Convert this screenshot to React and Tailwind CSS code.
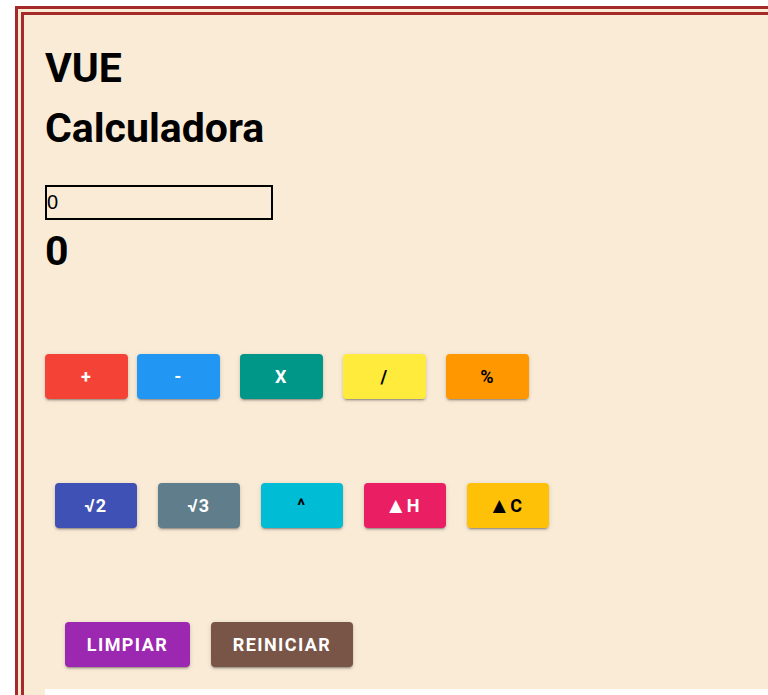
import React from "react";

const shadow = "shadow-[0_3px_1px_-2px_rgba(0,0,0,0.2),0_2px_2px_0_rgba(0,0,0,0.14),0_1px_5px_0_rgba(0,0,0,0.12)]";

function Btn({ className, children }) {
  return (
    <button
      className={`h-[45px] rounded-[4px] font-bold text-[18px] tracking-[0.08em] uppercase flex items-center justify-center shrink-0 ${shadow} ${className}`}
    >
      {children}
    </button>
  );
}

function Tri() {
  return <span className="mr-[3px] font-['DejaVu_Sans',sans-serif] font-normal text-[17px]">▲</span>;
}

export default function App() {
  return (
    <div className="h-[695px] overflow-hidden bg-white">
      <div className="mt-[6px] ml-[15px] w-[800px] border-[9px] border-double border-[#a52a2a] bg-[#faebd7] pt-[23px] pl-[21px] font-['Roboto',sans-serif] text-black">
        <h1 className="text-[41px] leading-[60px] font-bold">VUE</h1>
        <h1 className="text-[41px] leading-[60px] font-bold">Calculadora</h1>
        <input
          readOnly
          value="0"
          className="mt-[27px] block w-[228px] h-[35px] border-2 border-black bg-transparent px-0 text-[20px] font-['Liberation_Sans',sans-serif] outline-none"
        />
        <h1 className="mt-[1px] text-[41px] leading-[60px] font-bold">0</h1>

        <div className="mt-[73px] flex">
          <Btn className="w-[83px] bg-[#f44336] text-white">+</Btn>
          <Btn className="ml-[9px] w-[83px] bg-[#2196f3] text-white">-</Btn>
          <Btn className="ml-[20px] w-[83px] bg-[#009688] text-white">X</Btn>
          <Btn className="ml-[20px] w-[83px] bg-[#ffeb3b] text-black">/</Btn>
          <Btn className="ml-[20px] w-[83px] bg-[#ff9800] text-black">%</Btn>
        </div>

        <div className="mt-[84px] ml-[10px] flex gap-[21px]">
          <Btn className="w-[82px] bg-[#3f51b5] text-white">√2</Btn>
          <Btn className="w-[82px] bg-[#607d8b] text-white">√3</Btn>
          <Btn className="w-[82px] bg-[#00bcd4] text-black">^</Btn>
          <Btn className="w-[82px] bg-[#e91e63] text-white"><Tri />H</Btn>
          <Btn className="w-[82px] bg-[#ffc107] text-black"><Tri />C</Btn>
        </div>

        <div className="mt-[94px] ml-[20px] flex gap-[21px]">
          <Btn className="w-[125px] bg-[#9c27b0] text-white">Limpiar</Btn>
          <Btn className="w-[142px] bg-[#795548] text-white">Reiniciar</Btn>
        </div>

        <div className="mt-[22px] h-[40px] bg-white"></div>
      </div>
    </div>
  );
}
